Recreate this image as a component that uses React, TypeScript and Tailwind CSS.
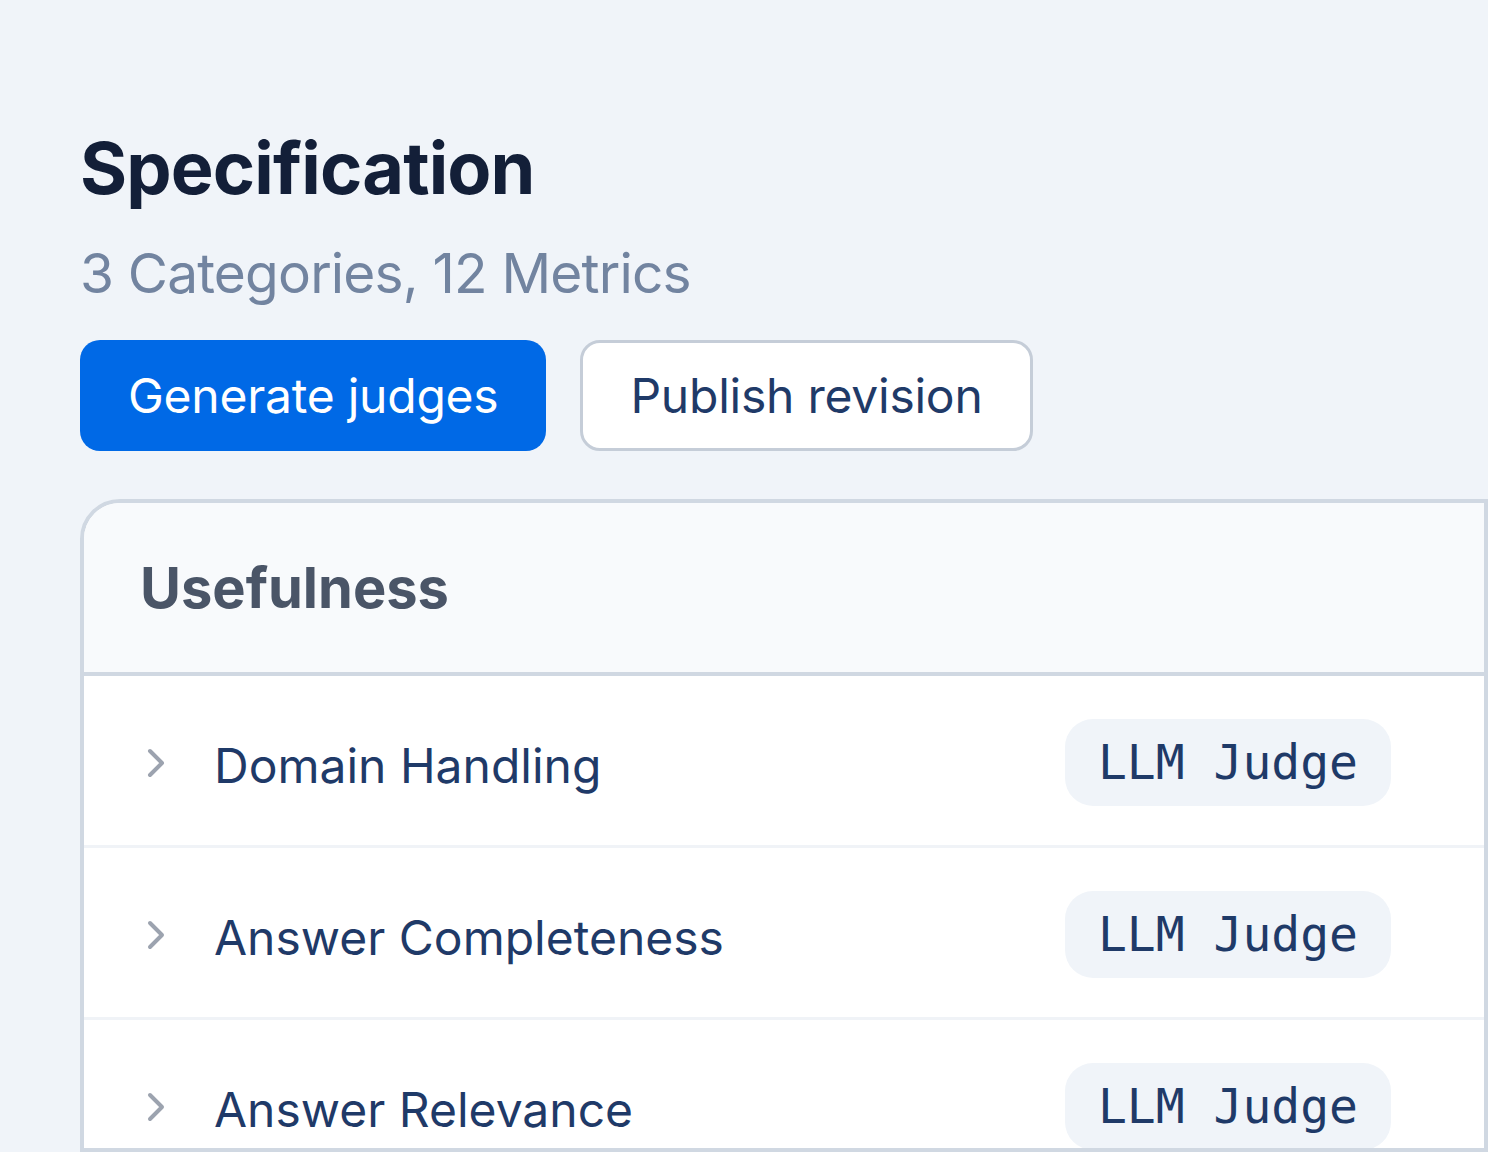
import React from 'react';

interface Metric {
  id: string;
  name: string;
  kind: string;
}

const metrics: Metric[] = [
  { id: 'domain', name: 'Domain Handling', kind: 'LLM Judge' },
  { id: 'completeness', name: 'Answer Completeness', kind: 'LLM Judge' },
  { id: 'relevance', name: 'Answer Relevance', kind: 'LLM Judge' },
];

function Chevron() {
  return (
    <svg
      viewBox="0 0 24 24"
      className="h-[48px] w-[48px] shrink-0 text-[#9ca3af]"
      fill="none"
      stroke="currentColor"
      strokeWidth={2}
      strokeLinecap="round"
      strokeLinejoin="round"
    >
      <path d="m9 18 6-6-6-6" />
    </svg>
  );
}

export default function App() {
  return (
    <div
      className="flex h-[1152px] flex-col overflow-hidden bg-[#f0f4f9] pl-[80px]"
      style={{ fontFamily: 'Inter, "Noto Sans", sans-serif' }}
    >
      {/* Page heading */}
      <h1 className="mt-[132px] text-[72px] leading-none font-bold tracking-[-0.012em] text-[#131f38]">
        Specification
      </h1>
      <p className="mt-[27px] text-[55px] leading-[84px] tracking-[-0.015em] text-[#7284a0]">
        3 Categories, 12 Metrics
      </p>

      <div className="mt-[25px] flex gap-[34px]">
        <button className="h-[111px] rounded-[20px] bg-[#0069e6] px-[48px] text-[48px] tracking-[-0.005em] text-white">
          Generate judges
        </button>
        <button className="h-[111px] rounded-[20px] border-[3px] border-[#c5cdd8] bg-white px-[47px] text-[48px] tracking-[-0.005em] text-[#1f3a68]">
          Publish revision
        </button>
      </div>

      {/* Category card */}
      <div className="mt-[48px] flex min-h-0 flex-1 flex-col overflow-hidden rounded-tl-[40px] border-4 border-[#d0d8e2] bg-white">
        <div className="flex h-[173px] shrink-0 items-center border-b-4 border-[#d0d8e2] bg-[#f8fafc] px-[56px]">
          <h2 className="text-[56px] font-bold text-[#4a5567]">Usefulness</h2>
        </div>

        {metrics.map((metric) => (
          <div
            key={metric.id}
            className="flex h-[172px] shrink-0 items-center justify-between border-b-[3px] border-[#f0f3f7] pt-[4px] pr-[93px] pl-[48px]"
          >
            <div className="flex items-center gap-[34px]">
              <Chevron />
              <span className="mt-[6px] text-[48px] text-[#1f3a68]">{metric.name}</span>
            </div>
            <span
              className="rounded-[28px] bg-[#f0f4f9] px-[33px] py-[15px] text-[48px] leading-[57px] text-[#1f3a68]"
              style={{ fontFamily: '"DejaVu Sans Mono", monospace' }}
            >
              {metric.kind}
            </span>
          </div>
        ))}
      </div>
    </div>
  );
}
